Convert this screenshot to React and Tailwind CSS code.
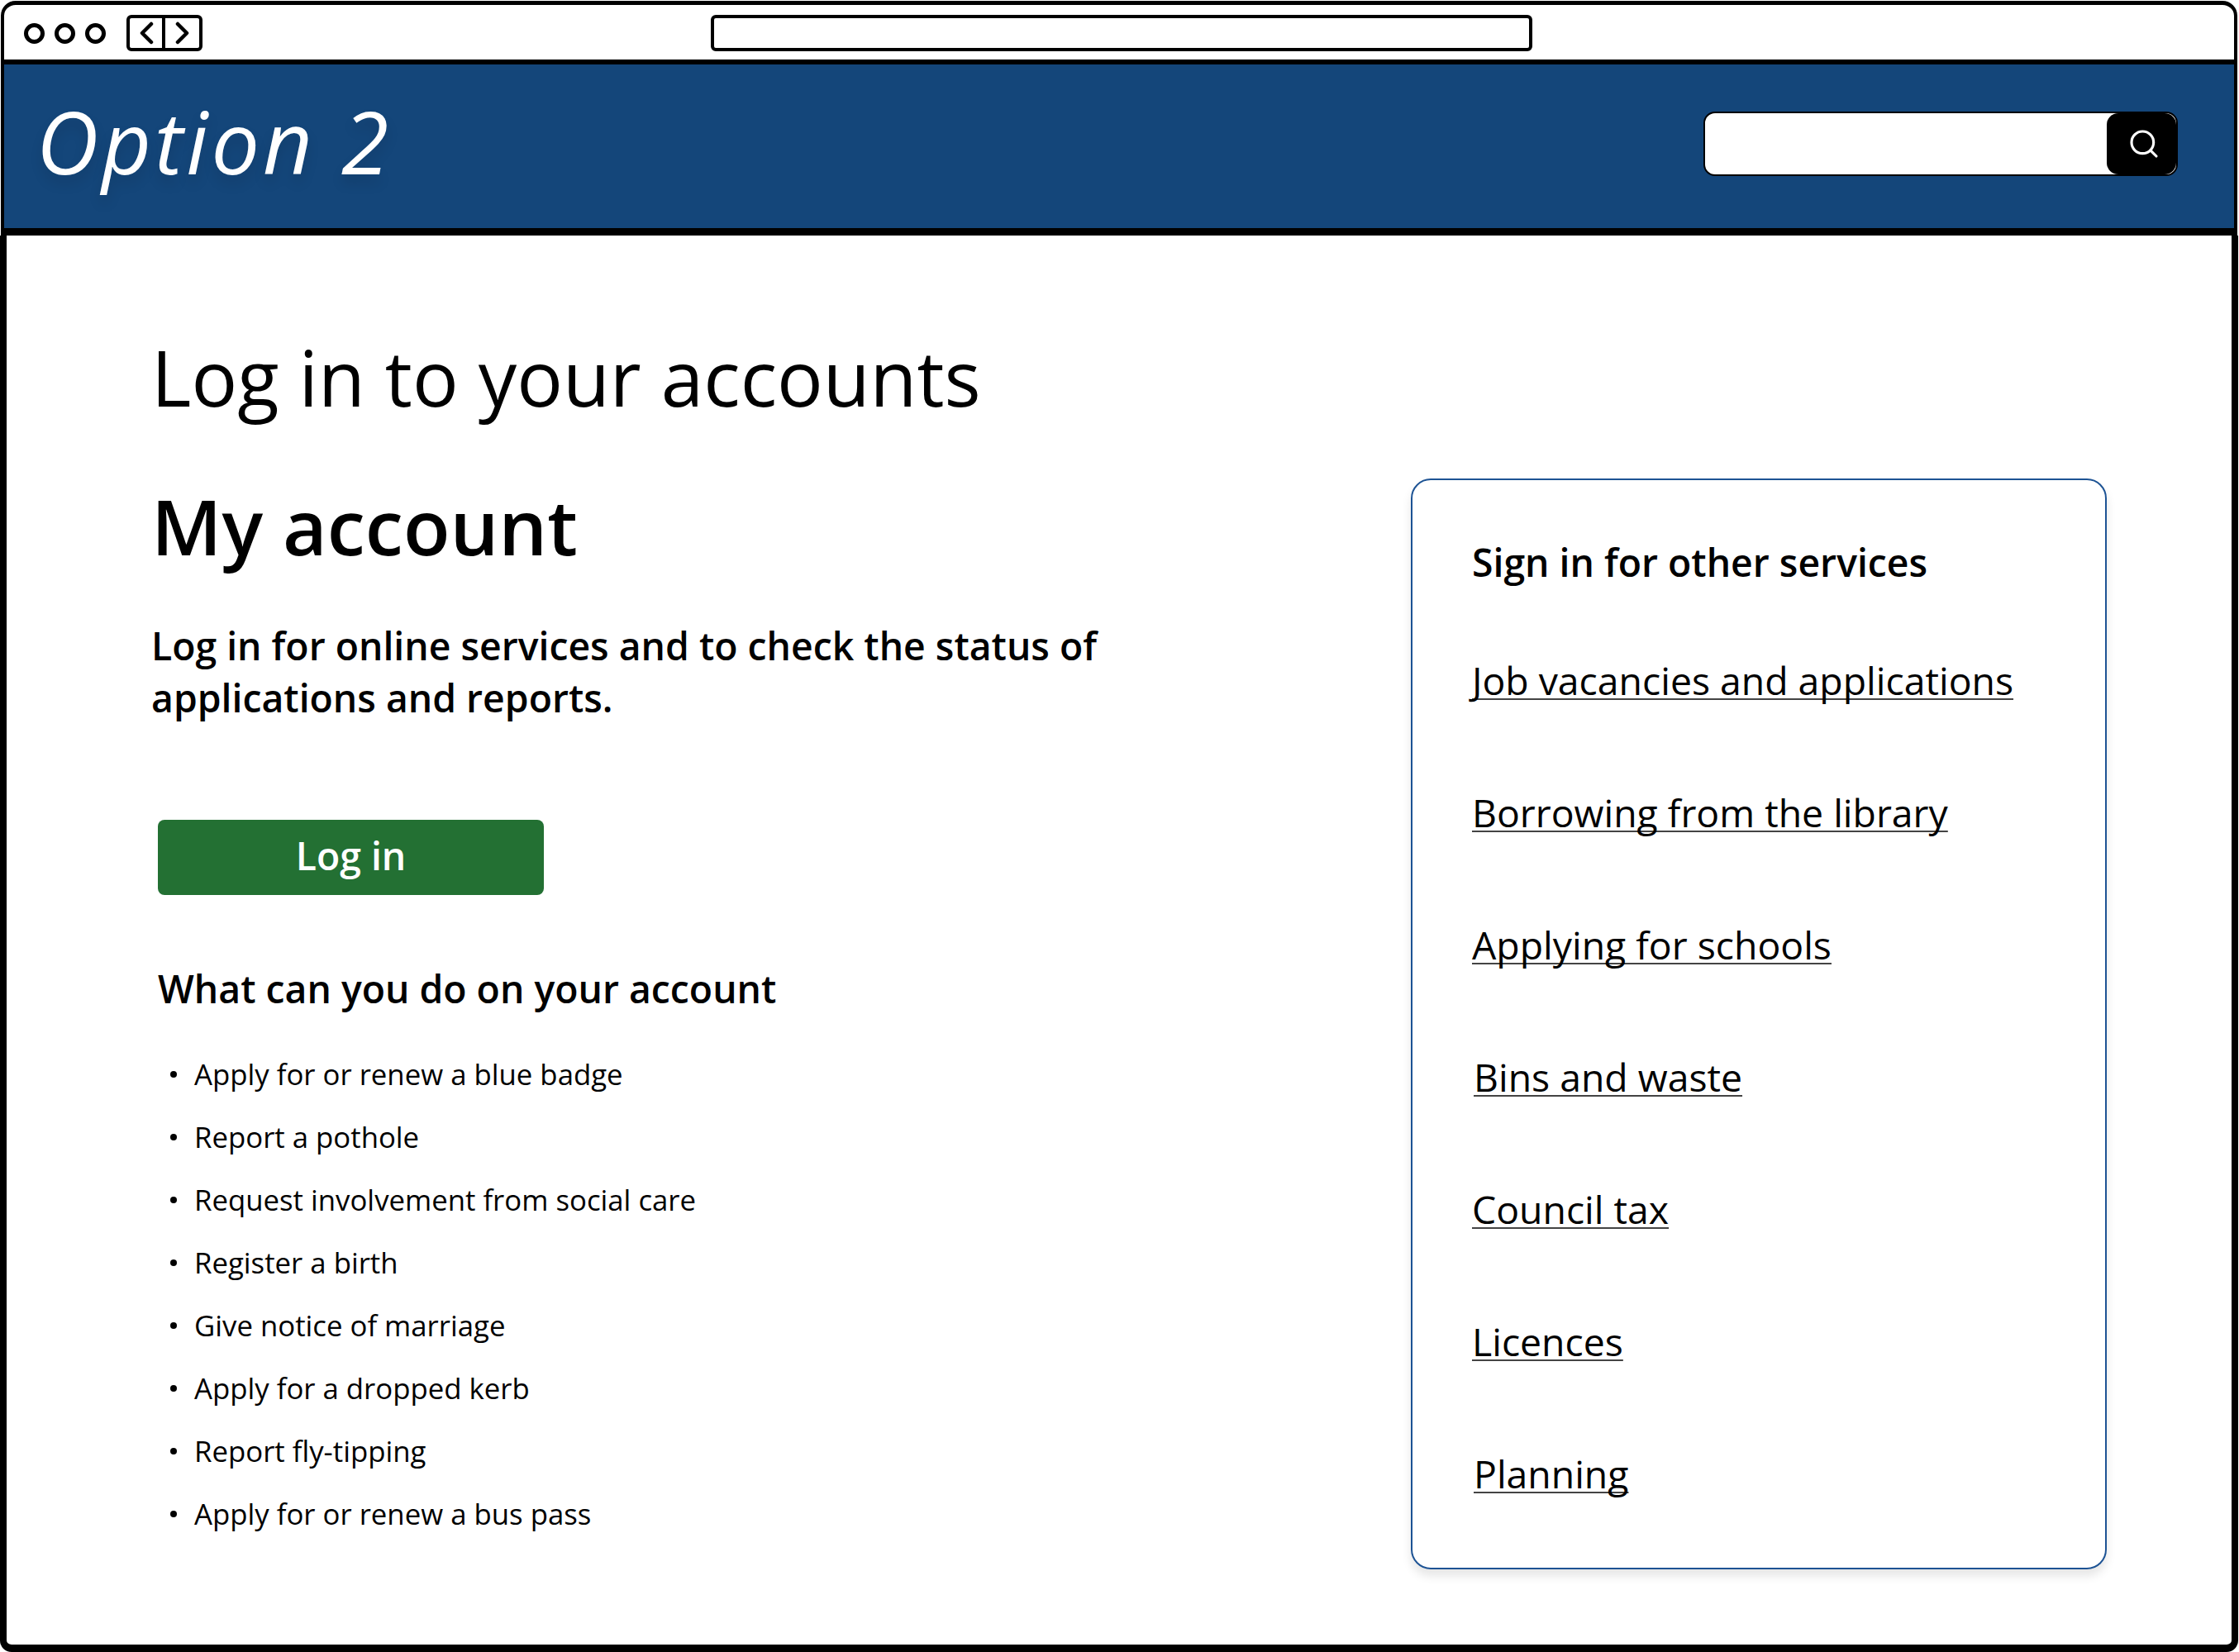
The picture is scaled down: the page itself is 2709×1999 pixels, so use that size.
import React from "react";
import { Search } from "lucide-react";

const items = [
  "Apply for or renew a blue badge",
  "Report a pothole",
  "Request involvement from social care",
  "Register a birth",
  "Give notice of marriage",
  "Apply for a dropped kerb",
  "Report fly-tipping",
  "Apply for or renew a bus pass",
];
const links = [
  ["Job vacancies and applications", "ml-0"],
  ["Borrowing from the library", "ml-0"],
  ["Applying for schools", "ml-0"],
  ["Bins and waste", "ml-[2px]"],
  ["Council tax", "ml-0"],
  ["Licences", "ml-0"],
  ["Planning", "ml-[2px]"],
];

export default function App() {
  return (
    <div className="w-[2709px] h-[1999px] bg-white pt-[1px] font-['Open_Sans','Noto_Sans',sans-serif] text-black flex flex-col">
      <div className="mx-[1px] w-[2706px] h-[77px] shrink-0 rounded-t-[18px] border-t-[5px] border-x-[4px] border-b-[6px] border-black flex items-center pl-[24px] pt-[2px] box-border">
        <div className="flex gap-[12px]">
          <span className="w-[25px] h-[25px] rounded-full border-[5px] border-black" />
          <span className="w-[25px] h-[25px] rounded-full border-[5px] border-black" />
          <span className="w-[25px] h-[25px] rounded-full border-[5px] border-black" />
        </div>
        <div className="ml-[25px] w-[92px] h-[44px] rounded-[6px] border-[4px] border-black flex">
          <span className="w-[43px] h-full border-r-[4px] border-black flex items-center justify-center">
            <svg width="18" height="28" viewBox="0 0 18 28" fill="none" stroke="black" strokeWidth="4.5" strokeLinecap="round" strokeLinejoin="round">
              <path d="M15 3 L4 14 L15 25" />
            </svg>
          </span>
          <span className="flex-1 flex items-center justify-center">
            <svg width="18" height="28" viewBox="0 0 18 28" fill="none" stroke="black" strokeWidth="4.5" strokeLinecap="round" strokeLinejoin="round">
              <path d="M3 3 L14 14 L3 25" />
            </svg>
          </span>
        </div>
        <div className="ml-[615px] w-[994px] h-[44px] rounded-[6px] border-[4px] border-black" />
      </div>

      <div className="mx-[1px] w-[2706px] h-[207px] shrink-0 bg-[#14467a] border-x-[4px] border-b-[9px] border-black flex items-center justify-between box-border">
        <span className="ml-[39px] mt-[-12px] italic font-medium text-white text-[104px] leading-none tracking-[4px] font-['Open_Sans',sans-serif] [text-shadow:0_10px_16px_rgba(0,0,0,0.12)]">
          Option 2
        </span>
        <div className="mr-[68px] mb-[6px] w-[574px] h-[78px] rounded-[14px] bg-white border-[2px] border-black flex justify-end box-border">
          <div className="w-[84px] h-full bg-black rounded-[14px] flex items-center justify-center pl-[5px]">
            <Search size={40} color="white" strokeWidth={1.9} />
          </div>
        </div>
      </div>

      <div className="w-[2708px] flex-1 bg-white border-x-[8px] border-b-[9px] border-black rounded-b-[14px] flex box-border min-h-0">
        <div className="pl-[175px] w-[1699px] shrink-0">
          <h1 className="mt-[115px] text-[92.7px] leading-[112px] font-normal">Log in to your accounts</h1>
          <h2 className="mt-[68px] text-[92.7px] leading-[112px] font-semibold">My account</h2>
          <p className="mt-[58px] text-[46.35px] leading-[63px] font-semibold w-[1240px]">
            Log in for online services and to check the status of applications and reports.
          </p>
          <button className="block mt-[116px] ml-[8px] w-[467px] h-[91px] rounded-[8px] bg-[#237033] text-white text-[46.35px] leading-[86px] font-semibold text-center pb-[10px]">
            Log in
          </button>
          <h3 className="mt-[83px] ml-[8px] text-[46.35px] leading-[60px] font-semibold">What can you do on your account</h3>
          <ul className="mt-[36px] ml-[23px]">
            {items.map((t) => (
              <li key={t} className="h-[76px] flex items-center text-[34.75px]">
                <span className="w-[8px] h-[8px] rounded-full bg-black mr-[21px]" />
                {t}
              </li>
            ))}
          </ul>
        </div>
        <div className="mt-[294px] w-[842px] h-[1320px] rounded-[24px] border-[2px] border-[#1d5394] shadow-[0_8px_12px_rgba(0,0,0,0.1)] pl-[72px] pt-[67px] box-border">
          <h2 className="text-[46.35px] leading-[64px] font-semibold">Sign in for other services</h2>
          <div className="mt-[77px] flex flex-col gap-[92px]">
            {links.map(([t, m]) => (
              <a key={t} className={`${m} text-[46.35px] leading-[68px] underline decoration-[2px] decoration-[#444444] underline-offset-[4px] [text-decoration-skip-ink:none] w-fit`}>
                {t}
              </a>
            ))}
          </div>
        </div>
      </div>
    </div>
  );
}
